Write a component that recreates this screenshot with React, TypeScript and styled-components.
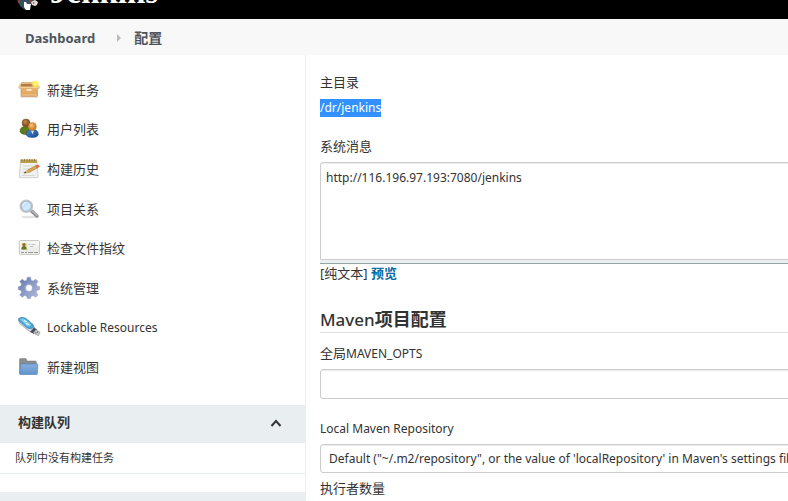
import React, { useState } from "react";
import styled, { createGlobalStyle } from "styled-components";

const GlobalStyle = createGlobalStyle`
  *, *::before, *::after { box-sizing: border-box; }
  body {
    margin: 0;
    background: #fff;
    color: #333;
    font-family: "Noto Sans", "Noto Sans CJK SC", sans-serif;
    font-size: 13px;
    line-height: 18px;
  }
  button, input, select, textarea { font: inherit; color: inherit; }
`;

const Page = styled.div`
  display: flex;
  flex-direction: column;
  height: 100vh;
  overflow: hidden;
`;

const Header = styled.header`
  display: flex;
  align-items: flex-end;
  gap: 12px;
  height: 19px;
  flex: none;
  padding: 0 16px 8px;
  overflow: hidden;
  background: #000;
`;

const Brand = styled.a`
  margin-bottom: 7px;
  color: #fff;
  font-family: "Liberation Serif", serif;
  font-size: 33px;
  font-weight: 700;
  line-height: 24px;
  text-decoration: none;
`;

const Breadcrumbs = styled.nav`
  display: flex;
  align-items: center;
  gap: 19px;
  height: 36px;
  flex: none;
  padding: 1px 25px 0;
  background: #f8f8f8;
`;

const Crumb = styled.a`
  color: #4d545d;
  font-weight: 700;
  font-size: 13px;
  text-decoration: none;
  & + svg { margin-left: 2px; margin-right: -6px; }
`;

const CurrentCrumb = styled(Crumb)`
  font-size: 14px;
`;

const Columns = styled.div`
  display: flex;
  flex: 1;
  min-height: 0;
`;

const Sidebar = styled.aside`
  display: flex;
  flex-direction: column;
  width: 306px;
  flex: none;
  border-right: 1px solid #eaeff2;
`;

const TaskList = styled.nav`
  display: grid;
  grid-auto-rows: 1fr;
  height: 317px;
  margin: 15px 0 18px;
  padding-left: 17px;
`;

const Task = styled.a`
  display: flex;
  align-items: center;
  gap: 6px;
  color: #333;
  text-decoration: none;
`;

const PaneHeader = styled.div`
  display: flex;
  align-items: center;
  justify-content: space-between;
  height: 38px;
  flex: none;
  padding: 0 17px 4px 18px;
  background: #e9eef1;
`;

const PaneTitle = styled.h2`
  margin: 0;
  font-size: 13px;
  font-weight: 700;
`;

const CollapseButton = styled.button<{ $collapsed: boolean }>`
  display: flex;
  width: 24px;
  height: 24px;
  padding: 6px;
  border: 0;
  background: none;
  transform: ${(p) => (p.$collapsed ? "rotate(180deg)" : "none")};
`;

const PaneBody = styled.div`
  height: 31px;
  flex: none;
  margin-bottom: 18px;
  padding: 6px 15px;
  border-bottom: 1px solid #e9eef1;
  font-size: 11px;
`;

const NextPane = styled.div`
  flex: 1;
  background: #e9eef1;
`;

const Main = styled.main`
  flex: 1;
  min-width: 0;
  padding: 18px 0 0 14px;
  overflow: hidden;
`;

/* The form runs past the right edge of the visible pane. */
const Form = styled.form`
  display: flex;
  flex-direction: column;
  margin-right: -20px;
`;

const Field = styled.div<{ $after: number; $gap?: number }>`
  display: flex;
  flex-direction: column;
  align-items: flex-start;
  gap: ${(p) => p.$gap ?? 7}px;
  margin-bottom: ${(p) => p.$after}px;
`;

const Label = styled.label`
  font-size: 13px;
  line-height: 18px;
`;

const Latin = styled.span`
  font-size: 12px;
  line-height: 12px;
`;

const Selected = styled.output`
  background: #3390ff;
  color: #fff;
  font-size: 12px;
`;

const Message = styled.textarea`
  display: block;
  width: 100%;
  height: 98px;
  padding: 6px 5px;
  border: 1px solid #ccc;
  border-radius: 3px 3px 0 0;
  box-shadow: inset 0 1px 1px rgba(0, 0, 0, 0.08);
  outline: 0;
  resize: none;
  font-size: 12px;
`;

const Editor = styled.div`
  width: 100%;
`;

const Grip = styled.div`
  height: 4px;
  background: #eaeff2;
  border-bottom: 1px solid #94a3a8;
`;

const Preview = styled.a`
  color: #0b6aa2;
  font-weight: 700;
  text-decoration: none;
`;

const SectionTitle = styled.h2`
  margin: 0 0 11px;
  border-bottom: 1px solid #ddd;
  font-size: 18px;
  font-weight: 700;
  line-height: 24px;
`;

const SectionLatin = styled.span`
  font-size: 17px;
  font-weight: 500;
`;

const TextInput = styled.input`
  width: 100%;
  height: 30px;
  padding: 0 8px;
  border: 1px solid #ccc;
  border-radius: 3px;
  box-shadow: inset 0 1px 1px rgba(0, 0, 0, 0.08);
  outline: 0;
`;

const Select = styled.select`
  width: 100%;
  height: 29px;
  padding: 0 8px;
  border: 1px solid #ccc;
  border-radius: 3px;
  background: #fff;
  box-shadow: inset 0 1px 1px rgba(0, 0, 0, 0.08);
  outline: 0;
  appearance: none;
  font-size: 12px;
`;

const Icon = ({ children }: { children: React.ReactNode }) => (
  <svg width="24" height="24" viewBox="0 0 24 24" aria-hidden="true">
    {children}
  </svg>
);

const BoxIcon = () => (
  <Icon>
    <defs>
      <linearGradient id="box" x1="0" y1="0" x2="0" y2="1">
        <stop offset="0" stopColor="#e9b56d" />
        <stop offset="1" stopColor="#d9a560" />
      </linearGradient>
      <radialGradient id="spark">
        <stop offset="0" stopColor="#fffbd0" />
        <stop offset=".45" stopColor="#ffee3a" />
        <stop offset="1" stopColor="#fff27a" stopOpacity="0" />
      </radialGradient>
    </defs>
    <path d="M3 18.600h18v1H3z" fill="#bbb" opacity=".5" />
    <path d="M4 9h16.500v8.800q0 .8-.8.800H4.800q-.8 0-.8-.8z" fill="url(#box)" stroke="#c08c50" strokeWidth=".6" />
    <path d="M4.500 4.500h15l.9 4.500H3.600z" fill="#b07c44" />
    <path d="M5 4h14v2H5z" fill="#e6b87e" />
    <path d="M4.400 5 1.500 9l.8 1.600h19.800l.6-1.600L19.600 5l1 3.500H3.500z" fill="#f3cd98" stroke="#d09a5c" strokeWidth=".4" />
    <path d="M9.500 11h5v2h-5z" fill="#fbe3bd" />
    <path d="M4.500 17h15.500" stroke="#efc68f" />
    <circle cx="18.300" cy="6" r="4.400" fill="url(#spark)" />
  </Icon>
);

const UsersIcon = () => (
  <Icon>
    <defs>
      <radialGradient id="brown" cx=".4" cy=".35"><stop stopColor="#c08a50" /><stop offset="1" stopColor="#875018" /></radialGradient>
      <radialGradient id="gold" cx=".4" cy=".35"><stop stopColor="#f8c37c" /><stop offset="1" stopColor="#cf842e" /></radialGradient>
      <linearGradient id="blue" x1="0" y1="0" x2="1" y2="1"><stop stopColor="#4a87cf" /><stop offset="1" stopColor="#174b91" /></linearGradient>
    </defs>
    <path d="M3 14.500Q3 9.500 8.500 9.500T14 14.500Q13 17.500 8.500 17.500T3 14.500z" fill="#5b7c18" stroke="#405b0d" strokeWidth=".6" />
    <circle cx="9" cy="6" r="4" fill="url(#brown)" stroke="#80501e" strokeWidth=".5" />
    <path d="M9.300 18Q9.300 12.300 15.300 12.300T21.300 18Q20 20.500 15.300 20.500T9.300 18z" fill="url(#blue)" stroke="#1c4d8f" strokeWidth=".6" />
    <path d="m14 13.500 1.500 4 1.500-4z" fill="#dfe8f5" />
    <circle cx="15.300" cy="9.500" r="4" fill="url(#gold)" stroke="#c17a2c" strokeWidth=".5" />
  </Icon>
);

const NotepadIcon = () => (
  <Icon>
    <path d="M3.500 3.500h16.500l1 16.500q0 .7-.7.700H3q-.7 0-.7-.7z" fill="#f1f2ef" stroke="#c3c5c0" strokeWidth=".8" />
    <path d="M3.500 2.500h16.500v3.500H3.500z" fill="#bfa04c" />
    <path d="M5 2v2.500M7.500 2v2.500M10 2v2.500M12.500 2v2.500M15 2v2.500M17.500 2v2.500" stroke="#7d7444" strokeWidth=".8" />
    <path d="M6 9h10M6 12h7M5.500 15h4M5 18.500h13" stroke="#d7d9d4" />
    <path d="m7.500 15.800 3-2.600L19 8.400l1.500 2.400-8.500 4.800z" fill="#dda650" stroke="#93672a" strokeWidth=".5" />
    <path d="m18.400 8.700 2-1q1.300-.3 1.900.7t-.3 1.800l-2.100 1z" fill="#df6950" />
    <path d="m7 16 3-2.600 1.700 2.200z" fill="#d8bd90" />
    <path d="m6.500 16.200 1.800-1.400.9 1.100z" fill="#333" />
  </Icon>
);

const SearchIcon = () => (
  <Icon>
    <defs>
      <linearGradient id="lens" x1="0" y1="0" x2="1" y2="1"><stop stopColor="#a9cdf2" /><stop offset=".6" stopColor="#d7eafb" /><stop offset="1" stopColor="#a5cbed" /></linearGradient>
    </defs>
    <ellipse cx="12" cy="20" rx="8" ry="1.300" fill="#e4e4e4" />
    <path d="m14.500 14 5.500 5" stroke="#85878a" strokeWidth="3.400" strokeLinecap="round" />
    <path d="m15 14 5 4.500" stroke="#b8babc" strokeWidth="1.500" strokeLinecap="round" />
    <circle cx="9.300" cy="9.300" r="5.800" fill="url(#lens)" stroke="#c3c5c9" strokeWidth="2" />
    <circle cx="9.300" cy="9.300" r="5" fill="none" stroke="#8fa9c8" strokeWidth=".6" />
    <path d="M5.800 9q.3-3.200 3.700-3.700" fill="none" stroke="#fff" strokeWidth="1.200" opacity=".7" />
  </Icon>
);

const CardIcon = () => (
  <Icon>
    <rect x="2.300" y="4.500" width="20.200" height="14" rx="1.200" fill="#ececea" stroke="#c9c9c6" />
    <path d="M3 5h19v5L3 14z" fill="#fafaf9" opacity=".7" />
    <path d="M4.500 7h6v7h-6z" fill="#dce2bc" />
    <circle cx="7" cy="8.600" r="1.700" fill="#a56b26" />
    <path d="M4.300 13.500q0-3.500 2.700-3.500t2.700 3.500z" fill="#68761b" />
    <path d="M11.500 8.500h2m1 0h4m-6 2h4" stroke="#b4b6b4" strokeWidth=".8" />
    <path d="M4 16.500h3m1 0h2m1 0h5m1 0h4" stroke="#8f918f" strokeWidth=".9" />
  </Icon>
);

const GearIcon = () => (
  <Icon>
    <defs>
      <linearGradient id="gear" x1="0" y1="0" x2="1" y2="1"><stop stopColor="#5d79ad" /><stop offset="1" stopColor="#b9bce0" /></linearGradient>
    </defs>
    <path
      fill="url(#gear)"
      stroke="#8c97bb"
      strokeWidth=".5"
      fillRule="evenodd"
      d="M10.300 1.200h3.200l.6 3 2 .8 2.600-1.800 2.300 2.300-1.800 2.600.8 2 2.500.6v3l-2.500.6-.8 2 1.800 2.600-2.300 2.300-2.600-1.800-2 .8-.6 2.300h-3.200l-.6-2.300-2-.8-2.600 1.800-2.300-2.300 1.800-2.600-.8-2-2.500-.6v-3l2.500-.6.8-2-1.800-2.600 2.300-2.300L7.700 5l2-.8zM12 8.500a3.500 3.500 0 1 0 0 7 3.500 3.500 0 0 0 0-7z"
    />
    <circle cx="12" cy="12" r="4.300" fill="none" stroke="#98a3c9" strokeWidth=".8" />
  </Icon>
);

const UsbIcon = () => (
  <Icon>
    <path d="M1.500 4q2-3 6-2l9.500 8q2 4-1 5.500-3 1-5-1L2.500 7.500z" fill="#d2d5e0" stroke="#9ca0ab" strokeWidth=".6" />
    <path d="M1.500 2.500Q4.500.3 9 2.400l7 6q1.500 3.200-1.500 4.200-3 .3-5-1L2 5z" fill="#48a6d6" stroke="#3c83ab" strokeWidth=".6" />
    <path d="M3 3q2.500-1 5 .5l6 5-1 2-3-.5z" fill="#7fd0f3" />
    <path d="m7 4.500 3 1.500M9 7.500l3 1" stroke="#e9f7ff" strokeWidth="1.200" />
    <path d="m13 16 4-4.500 3 2-3 4.500z" fill="#4c4f55" />
    <path d="m16.300 17 2.500-3.200 4.200 2.500-1.600 3.400z" fill="#cfd0d3" stroke="#85878c" strokeWidth=".6" />
    <path d="m18.500 16.500 1 .6m.7-1.300 1 .6" stroke="#444" strokeWidth="1.100" />
  </Icon>
);

const FolderIcon = () => (
  <Icon>
    <defs>
      <linearGradient id="folder" x1="0" y1="0" x2="0" y2="1"><stop stopColor="#86afe0" /><stop offset="1" stopColor="#6494cd" /></linearGradient>
    </defs>
    <path d="M2.500 19V4.300q0-.8.8-.8h5.200q.8 0 1 .8l.4 1.700h8.500q1 0 1 1V19z" fill="#898c8e" stroke="#77797b" strokeWidth=".5" />
    <path d="M4.500 9h15.800q.7 0 .6.700l-.5 9q-.1.800-.9.800H3.600q-.8 0-.8-.8l1-9q.1-.7.700-.7z" fill="url(#folder)" stroke="#5685bd" strokeWidth=".6" />
  </Icon>
);

const tasks = [
  { label: "新建任务", Glyph: BoxIcon },
  { label: "用户列表", Glyph: UsersIcon },
  { label: "构建历史", Glyph: NotepadIcon },
  { label: "项目关系", Glyph: SearchIcon },
  { label: "检查文件指纹", Glyph: CardIcon },
  { label: "系统管理", Glyph: GearIcon },
  { label: "Lockable Resources", Glyph: UsbIcon, latin: true },
  { label: "新建视图", Glyph: FolderIcon },
];

export default function App() {
  const [collapsed, setCollapsed] = useState(false);

  return (
    <>
      <GlobalStyle />
      <Page>
        <Header>
          <svg width="22" height="24" viewBox="0 0 22 24" aria-hidden="true">
            <path d="M2 12V4h18v9l-3 2-3 4-5 4-5-4z" fill="#35505f" />
            <path d="M1 11h3v6l-2-1zM13 13h3l-2 4z" fill="#8e3a36" />
            <path d="M8 15h2l1 2h4l-1 6h-4l-2-3z" fill="#fff" />
            <path d="m15 15 4-2 3 2-1 3-2 1-3-1z" fill="#e6dcd8" />
            <path d="m17 15 2 1-2 1z" fill="#b43a32" />
          </svg>
          <Brand href="#">Jenkins</Brand>
        </Header>

        <Breadcrumbs aria-label="Breadcrumb">
          <Crumb href="#">Dashboard</Crumb>
          <svg width="5" height="8" viewBox="0 0 5 8" aria-hidden="true">
            <path d="M1 0v8l4-4z" fill="#bbb" />
          </svg>
          <CurrentCrumb href="#">配置</CurrentCrumb>
        </Breadcrumbs>

        <Columns>
          <Sidebar>
            <TaskList>
              {tasks.map(({ label, Glyph, latin }) => (
                <Task href="#" key={label}>
                  <Glyph />
                  {latin ? <Latin>{label}</Latin> : label}
                </Task>
              ))}
            </TaskList>
            <PaneHeader>
              <PaneTitle>构建队列</PaneTitle>
              <CollapseButton
                type="button"
                aria-label="折叠"
                aria-expanded={!collapsed}
                $collapsed={collapsed}
                onClick={() => setCollapsed(!collapsed)}
              >
                <svg width="12" height="12" viewBox="0 0 12 12" aria-hidden="true">
                  <path d="m1.500 10 4.500-5 4.500 5" fill="none" stroke="#333" strokeWidth="2" />
                </svg>
              </CollapseButton>
            </PaneHeader>
            {!collapsed && <PaneBody>队列中没有构建任务</PaneBody>}
            <NextPane />
          </Sidebar>

          <Main>
            <Form>
              <Field $after={20} $gap={8}>
                <Label htmlFor="home">主目录</Label>
                <Selected id="home">/dr/jenkins</Selected>
              </Field>
              <Field $after={0}>
                <Label htmlFor="message">系统消息</Label>
                <Editor>
                  <Message id="message" defaultValue="http://116.196.97.193:7080/jenkins" />
                  <Grip />
                </Editor>
              </Field>
              <Field $after={25}>
                <div>
                  [纯文本] <Preview href="#">预览</Preview>
                </div>
              </Field>
              <SectionTitle>
                <SectionLatin>Maven</SectionLatin>项目配置
              </SectionTitle>
              <Field $after={20}>
                <Label htmlFor="opts">
                  全局<Latin>MAVEN_OPTS</Latin>
                </Label>
                <TextInput id="opts" type="text" />
              </Field>
              <Field $after={6}>
                <Label htmlFor="repo">
                  <Latin>Local Maven Repository</Latin>
                </Label>
                <Select id="repo">
                  <option>
                    Default ("~/.m2/repository", or the value of 'localRepository' in Maven's settings file, if defined)
                  </option>
                </Select>
              </Field>
              <Label>执行者数量</Label>
            </Form>
          </Main>
        </Columns>
      </Page>
    </>
  );
}
